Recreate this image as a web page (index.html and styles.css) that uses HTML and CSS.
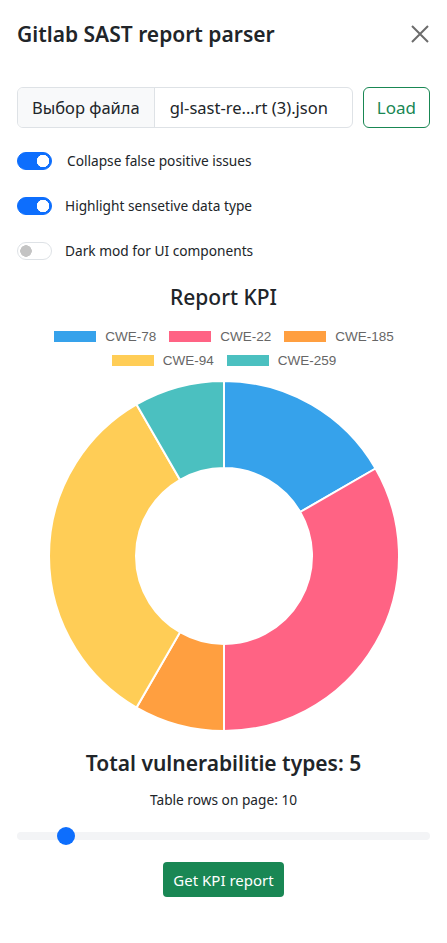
FILE: index.html
```html
<!DOCTYPE html>
<html>
<head>
    <title>Gitlab SAST report parser</title>
    <link rel="stylesheet" href="styles.css">
</head>
<body>
    <div class="panel">
        <div class="panel-header">
            <h1 class="panel-title">Gitlab SAST report parser</h1>
            <button class="close-btn" type="button" aria-label="Close">
                <svg width="20" height="20" viewBox="0 0 20 20">
                    <path d="M2 2 L18 18 M18 2 L2 18" stroke="#6c6c6c" stroke-width="2" fill="none"/>
                </svg>
            </button>
        </div>

        <div class="file-row">
            <label class="file-input">
                <span class="file-btn">Выбор файла</span>
                <span class="file-name">gl-sast-re...rt (3).json</span>
            </label>
            <button class="btn-outline" type="button">Load</button>
        </div>

        <div class="switches">
            <div class="switch-row">
                <input type="checkbox" class="switch" checked>
                <label class="switch-label first">Collapse false positive issues</label>
            </div>
            <div class="switch-row">
                <input type="checkbox" class="switch" checked>
                <label class="switch-label">Highlight sensetive data type</label>
            </div>
            <div class="switch-row">
                <input type="checkbox" class="switch">
                <label class="switch-label">Dark mod for UI components</label>
            </div>
        </div>

        <h2 class="chart-title">Report KPI</h2>

        <div class="legend">
            <div class="legend-line">
                <span class="legend-item"><i class="box c-blue"></i>CWE-78</span>
                <span class="legend-item"><i class="box c-red"></i>CWE-22</span>
                <span class="legend-item"><i class="box c-orange"></i>CWE-185</span>
            </div>
            <div class="legend-line">
                <span class="legend-item"><i class="box c-yellow"></i>CWE-94</span>
                <span class="legend-item"><i class="box c-teal"></i>CWE-259</span>
            </div>
        </div>

        <div class="chart">
            <svg width="352" height="352" viewBox="-176 -176 352 352">
                <!-- 12 parts: 2, 4, 1, 4, 1 -->
                <path d="M0 -175 A175 175 0 0 1 151.55 -87.5 L76.21 -44 A88 88 0 0 0 0 -88 Z" fill="#36a2eb" stroke="#fff" stroke-width="2"/>
                <path d="M151.55 -87.5 A175 175 0 0 1 0 175 L0 88 A88 88 0 0 0 76.21 -44 Z" fill="#ff6384" stroke="#fff" stroke-width="2"/>
                <path d="M0 175 A175 175 0 0 1 -87.5 151.55 L-44 76.21 A88 88 0 0 0 0 88 Z" fill="#ff9f40" stroke="#fff" stroke-width="2"/>
                <path d="M-87.5 151.55 A175 175 0 0 1 -87.5 -151.55 L-44 -76.21 A88 88 0 0 0 -44 76.21 Z" fill="#ffcd56" stroke="#fff" stroke-width="2"/>
                <path d="M-87.5 -151.55 A175 175 0 0 1 0 -175 L0 -88 A88 88 0 0 0 -44 -76.21 Z" fill="#4bc0c0" stroke="#fff" stroke-width="2"/>
            </svg>
        </div>

        <h3 class="total">Total vulnerabilitie types: 5</h3>
        <p class="rows-label">Table rows on page: 10</p>
        <input type="range" class="range" min="0" max="100" value="10">

        <div class="actions">
            <button class="btn-success" type="button">Get KPI report</button>
        </div>
    </div>
</body>
</html>
```

FILE: styles.css
```css
body {
    margin: 0;
    background-color: #fff;
    font-family: "Noto Sans", "Open Sans", sans-serif;
    color: #212529;
}

.panel {
    width: 447px;
    padding: 0 17px;
    box-sizing: border-box;
}

.panel-header {
    display: flex;
    align-items: center;
    justify-content: space-between;
    height: 68px;
}

.panel-title {
    margin: 0;
    font-size: 21px;
    font-weight: 600;
}

.close-btn {
    border: none;
    background: none;
    padding: 0;
    width: 20px;
    height: 20px;
    cursor: pointer;
}

.file-row {
    display: flex;
    gap: 10px;
    margin-top: 19px;
}

.file-input {
    flex: 1;
    display: flex;
    height: 41px;
    border: 1px solid #dee2e6;
    border-radius: 6px;
    box-sizing: border-box;
    overflow: hidden;
}

.file-btn {
    display: flex;
    align-items: center;
    padding: 0 14px;
    background-color: #f8f9fa;
    border-right: 1px solid #dee2e6;
    font-size: 16.5px;
}

.file-name {
    display: flex;
    align-items: center;
    padding: 0 15px;
    font-size: 16.5px;
}

.btn-outline {
    height: 41px;
    padding: 0 13px;
    background: #fff;
    color: #198754;
    border: 1px solid #198754;
    border-radius: 6px;
    font-family: inherit;
    font-size: 17px;
}

.switches {
    margin-top: 10px;
}

.switch-row {
    display: flex;
    align-items: center;
    height: 45px;
}

.switch {
    appearance: none;
    margin: 0;
    width: 35px;
    height: 18px;
    border-radius: 9px;
    border: 1px solid #dee2e6;
    box-sizing: border-box;
    background-color: #fff;
    background-image: radial-gradient(circle at 8px center, #c4c4c4 5.5px, transparent 6px);
}

.switch:checked {
    border-color: #0d6efd;
    background-color: #0d6efd;
    background-image: radial-gradient(circle at 25px center, #fff 6px, transparent 6.5px);
}

.switch-label {
    margin-left: 13px;
    font-size: 13.7px;
}

.switch-label.first {
    margin-left: 15px;
}

.chart-title {
    margin: 10px 0 0;
    text-align: center;
    font-size: 21px;
    font-weight: 500;
}

.legend {
    margin-top: 13px;
    font-family: "Liberation Sans", Arial, sans-serif;
    font-size: 13.5px;
    color: #666;
}

.legend-line {
    display: flex;
    justify-content: center;
    gap: 12px;
    height: 24px;
    align-items: center;
}

.legend-item {
    display: flex;
    align-items: center;
}

.box {
    display: inline-block;
    width: 42px;
    height: 11px;
    margin-right: 8px;
    border: 1px solid #fff;
}

.c-blue { background-color: #36a2eb; }
.c-red { background-color: #ff6384; }
.c-orange { background-color: #ff9f40; }
.c-yellow { background-color: #ffcd56; }
.c-teal { background-color: #4bc0c0; }

.chart {
    display: flex;
    justify-content: center;
    margin-top: 8px;
}

.total {
    margin: 17px 0 0;
    text-align: center;
    font-size: 21px;
    font-weight: 600;
}

.rows-label {
    margin: 13px 0 0;
    text-align: center;
    font-size: 13.7px;
}

.range {
    appearance: none;
    display: block;
    width: 100%;
    margin: 18px 0 0;
    height: 18px;
    background: transparent;
}

.range::-webkit-slider-runnable-track {
    height: 8px;
    border-radius: 4px;
    background-color: #f3f4f6;
}

.range::-webkit-slider-thumb {
    appearance: none;
    width: 18px;
    height: 18px;
    margin-top: -5px;
    border-radius: 50%;
    background-color: #0d6efd;
}

.actions {
    display: flex;
    justify-content: center;
    margin-top: 17px;
}

.btn-success {
    height: 35px;
    box-sizing: border-box;
    padding: 0 10px;
    background-color: #198754;
    color: #fff;
    border: none;
    border-radius: 4px;
    font-family: inherit;
    font-size: 15px;
}
```
